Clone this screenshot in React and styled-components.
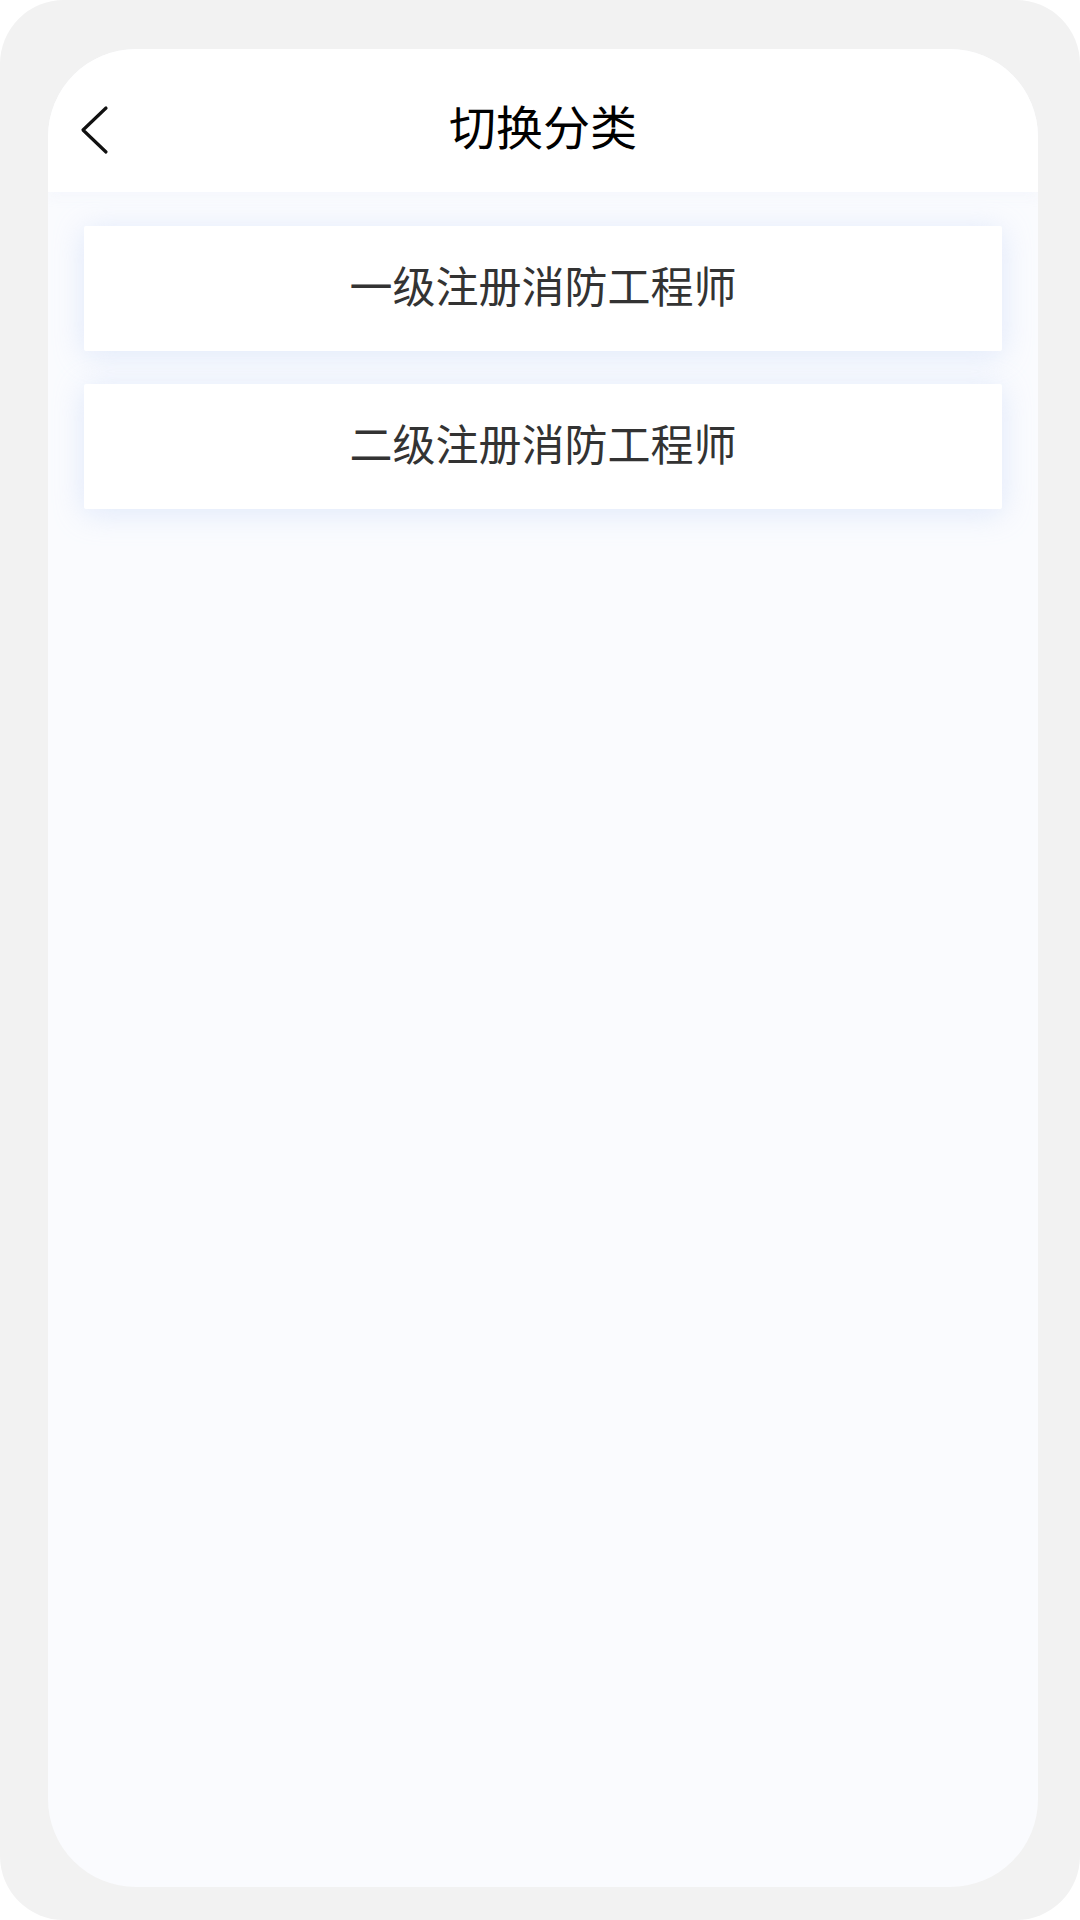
import React from "react";
import styled, { createGlobalStyle } from "styled-components";

const categories = ["一级注册消防工程师", "二级注册消防工程师"];

const GlobalStyle = createGlobalStyle`
  html, body {
    margin: 0;
    padding: 0;
    background: #ffffff;
  }

  body {
    font-family: "Noto Sans CJK SC", "Noto Sans", sans-serif;
  }
`;

const App = () => {
  return (
    <>
      <GlobalStyle />
      <Frame>
        <Phone>
          <Header>
            <BackButton aria-label="返回">
              <svg width="30" height="50" viewBox="0 0 30 50" fill="none">
                <polyline
                  points="26,3 3,25 26,47"
                  stroke="#111"
                  strokeWidth="3.2"
                  strokeLinecap="round"
                  strokeLinejoin="round"
                />
              </svg>
            </BackButton>
            <Title>切换分类</Title>
            <span />
          </Header>
          <List>
            {categories.map((name) => (
              <Card key={name}>{name}</Card>
            ))}
          </List>
        </Phone>
      </Frame>
    </>
  );
};

const Frame = styled.div`
  box-sizing: border-box;
  width: 1080px;
  height: 1920px;
  padding: 49px 42px 33px 48px;
  background: #f2f2f2;
  border-radius: 64px;
`;

const Phone = styled.div`
  display: flex;
  flex-direction: column;
  height: 100%;
  background: #fafbfe;
  border-radius: 88px;
  overflow: hidden;
`;

const Header = styled.header`
  display: grid;
  grid-template-columns: 1fr auto 1fr;
  align-items: center;
  box-sizing: border-box;
  height: 143px;
  padding: 18px 32px 0;
  background: #ffffff;
  box-shadow: 0 4px 12px rgba(244, 246, 252, 0.9);
  position: relative;
  z-index: 1;
`;

const BackButton = styled.button`
  justify-self: start;
  display: flex;
  padding: 0;
  border: none;
  background: none;

  svg {
    display: block;
  }
`;

const Title = styled.h1`
  margin: 0 0 10px;
  font-size: 47px;
  font-weight: 400;
  color: #000000;
`;

const List = styled.div`
  display: flex;
  flex-direction: column;
  gap: 33px;
  padding: 34px 36px;
`;

const Card = styled.div`
  display: flex;
  align-items: center;
  justify-content: center;
  box-sizing: border-box;
  height: 125px;
  padding-bottom: 10px;
  background: #ffffff;
  border-radius: 2px;
  box-shadow: 0 4px 30px rgba(185, 208, 245, 0.42);
  font-size: 43px;
  color: #333333;
`;

export default App;
